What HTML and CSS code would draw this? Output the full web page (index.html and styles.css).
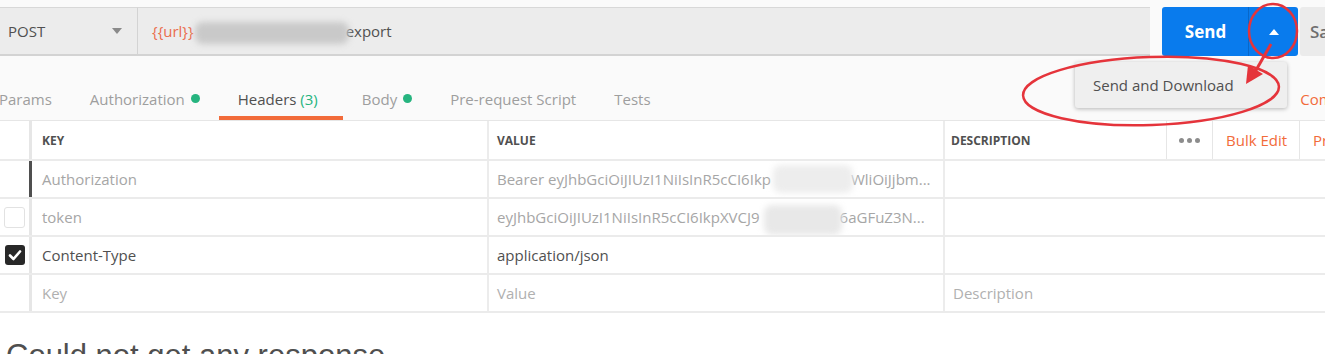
FILE: index.html
```html
<!DOCTYPE html>
<html>
<head>
<meta charset="utf-8">
<link rel="stylesheet" href="styles.css">
</head>
<body>
<div class="app">
  <div class="top">
    <div class="request-bar">
      <div class="method"><span>POST</span><span class="caret-down"></span></div>
      <div class="url"><span class="var">{{url}}</span><span class="blur url-blur"></span><span class="path">export</span></div>
      <div class="send-group">
        <div class="send">Send</div>
        <div class="send-more"><span class="caret-up"></span></div>
      </div>
      <div class="save">Save</div>
    </div>
    <div class="tabs-row">
      <div class="tab">Params</div>
      <div class="tab">Authorization<span class="dot"></span></div>
      <div class="tab active">Headers&nbsp;<span class="count">(3)</span></div>
      <div class="tab">Body<span class="dot"></span></div>
      <div class="tab">Pre-request Script</div>
      <div class="tab">Tests</div>
      <div class="links"><span>Cookies</span><span>Code</span><span>Comments (0)</span></div>
    </div>
  </div>
  <div class="table">
    <div class="row head">
      <div class="cell chk"></div>
      <div class="cell key">KEY</div>
      <div class="cell val">VALUE</div>
      <div class="cell desc">
        <span class="desc-title">DESCRIPTION</span>
        <span class="act dots"><i></i><i></i><i></i></span>
        <span class="act bulk">Bulk Edit</span>
        <span class="act presets">Presets</span>
      </div>
    </div>
    <div class="row disabled">
      <div class="cell chk"></div>
      <div class="cell key hover">Authorization</div>
      <div class="cell val">Bearer eyJhbGciOiJIUzI1NiIsInR5cCI6Ikp<span class="blur v-blur"></span>WliOiJjbm...</div>
      <div class="cell desc"></div>
    </div>
    <div class="row disabled">
      <div class="cell chk"><span class="box"></span></div>
      <div class="cell key">token</div>
      <div class="cell val">eyJhbGciOiJIUzI1NiIsInR5cCI6IkpXVCJ9<span class="blur v-blur2"></span>6aGFuZ3N...</div>
      <div class="cell desc"></div>
    </div>
    <div class="row">
      <div class="cell chk"><span class="box checked"><svg width="20" height="20" viewBox="0 0 20 20"><polyline points="5,10.5 8.5,14 15,6.5" fill="none" stroke="#fff" stroke-width="2.6" stroke-linecap="round" stroke-linejoin="round"/></svg></span></div>
      <div class="cell key">Content-Type</div>
      <div class="cell val">application/json</div>
      <div class="cell desc"></div>
    </div>
    <div class="row placeholder">
      <div class="cell chk"></div>
      <div class="cell key">Key</div>
      <div class="cell val">Value</div>
      <div class="cell desc">Description</div>
    </div>
  </div>
  <div class="response">Could not get any response</div>
</div>
<div class="dropdown">Send and Download</div>
<svg class="annot" width="1325" height="354" viewBox="0 0 1325 354">
  <ellipse cx="1273" cy="31" rx="24" ry="27" fill="none" stroke="#e5343b" stroke-width="2.5"/>
  <line x1="1271" y1="44" x2="1255" y2="72" stroke="#e5343b" stroke-width="3"/>
  <polygon points="1246,84 1248,65 1263,74" fill="#e5343b"/>
  <ellipse cx="1151" cy="91" rx="128" ry="34" fill="none" stroke="#e5343b" stroke-width="2.5" transform="rotate(-2 1151 91)"/>
</svg>
</body>
</html>
```
FILE: styles.css
```css
* { box-sizing: border-box; }
html, body { margin: 0; padding: 0; }
body {
  width: 1325px;
  height: 354px;
  overflow: hidden;
  background: #ffffff;
  font-family: "Open Sans", "Noto Sans", sans-serif;
  font-size: 15px;
  color: #505050;
  position: relative;
}
.top { background: #fafafa; padding-top: 7px; }
.request-bar { display: flex; height: 49px; }
.method {
  width: 138px;
  flex-shrink: 0;
  background: #ececec;
  border-top: 1px solid #d8d8d8;
  border-bottom: 2px solid #d3d3d3;
  border-right: 1px solid #d3d3d3;
  display: flex;
  align-items: center;
  justify-content: space-between;
  padding: 0 15px 0 8px;
  color: #505050;
}
.caret-down {
  width: 0; height: 0;
  border-left: 5px solid transparent;
  border-right: 5px solid transparent;
  border-top: 6px solid #8a8a8a;
}
.url {
  flex: 1;
  background: #ececec;
  border-top: 1px solid #d8d8d8;
  border-bottom: 2px solid #d3d3d3;
  display: flex;
  align-items: center;
  padding-left: 14px;
  white-space: nowrap;
}
.var { color: #ea6c4c; }
.blur { display: inline-block; filter: blur(3px); border-radius: 8px; flex-shrink: 0; }
.url-blur { width: 154px; height: 22px; background: #c9c9c9; margin: 4px -3px 0 1px; }
.path { color: #505050; }
.send-group {
  margin-left: 12px;
  width: 136px;
  flex-shrink: 0;
  display: flex;
  background: #097bed;
  border-radius: 3px;
}
.send {
  width: 87px;
  display: flex; align-items: center; justify-content: center;
  color: #fff; font-weight: 700; font-size: 17px;
  padding-left: 1px;
  border-right: 1px solid #0867c9;
}
.send-more { flex: 1; display: flex; align-items: center; justify-content: center; }
.caret-up {
  width: 0; height: 0;
  border-left: 5px solid transparent;
  border-right: 5px solid transparent;
  border-bottom: 6px solid #ffffff;
}
.save {
  margin-left: 2px;
  width: 25px;
  flex-shrink: 0;
  overflow: hidden;
  white-space: nowrap;
  background: #ebebeb;
  border-radius: 3px 0 0 3px;
  display: flex; align-items: center;
  padding-left: 10px;
  font-size: 17px; font-weight: 600; color: #6e6e6e;
}
.tabs-row {
  display: flex;
  align-items: flex-end;
  height: 65px;
  margin-left: -20px;
  border-bottom: 1px solid #e6e6e6;
  white-space: nowrap;
}
.tab, .links {
  height: 50px;
  padding: 12px 19px 0;
  border-bottom: 4px solid transparent;
  display: flex;
  align-items: center;
  color: #9e9e9e;
  flex-shrink: 0;
}
.tab.active { color: #505050; border-bottom-color: #f26b3a; padding-right: 25px; }
.count { color: #26b47f; }
.dot { width: 9px; height: 9px; border-radius: 50%; background: #26b47f; margin-left: 6px; margin-top: -1px; }
.links { margin-left: 514px; gap: 13px; color: #f26b3a; padding: 12px 0 0; }
.row {
  display: grid;
  grid-template-columns: 29px 458px 456px 1fr;
  height: 38px;
  border-bottom: 2px solid #ebebeb;
  white-space: nowrap;
}
.row.head { height: 40px; }
.cell { display: flex; align-items: center; overflow: hidden; }
.key { border-left: 3px solid #e6e6e6; padding-left: 10px; }
.key.hover { border-left-color: #4f4f4f; }
.val { border-left: 2px solid #ececec; padding-left: 8px; }
.desc { border-left: 2px solid #ececec; padding-left: 8px; }
.head .cell { font-size: 12px; font-weight: 700; color: #505050; }
.head .desc { padding-left: 6px; }
.desc-title { width: 215px; flex-shrink: 0; }
.act {
  height: 100%;
  flex-shrink: 0;
  display: flex; align-items: center;
  border-left: 1px solid #e6e6e6;
  font-size: 15px; font-weight: 400;
}
.head .cell .bulk, .head .cell .presets { color: #f26b3a; font-weight: 400; font-size: 15px; }
.dots { width: 46px; justify-content: center; gap: 3px; padding-top: 1px; }
.dots i { width: 5px; height: 5px; border-radius: 50%; background: #8c8c8c; display: block; }
.bulk { width: 87px; padding-left: 13px; }
.presets { padding-left: 13px; }
.disabled .cell { color: #a6a6a6; }
.placeholder .cell { color: #b0b0b0; }
.chk { padding-left: 4px; }
.box {
  width: 21px; height: 21px;
  border: 1px solid #e2e2e2;
  border-radius: 3px;
  background: #fff;
  display: block;
}
.box.checked {
  width: 20px; height: 20px;
  margin-left: 1px;
  border: 0;
  background: #282828;
}
.box svg { display: block; }
.v-blur { width: 80px; height: 28px; background: #ededed; margin: 0 -2px 0 2px; }
.v-blur2 { width: 78px; height: 30px; background: #e8e8e8; margin: 6px -2px 0 4px; }
.response {
  margin: 25px 0 0 6px;
  font-family: "Liberation Sans", Arial, sans-serif;
  font-size: 31px;
  line-height: 36px;
  color: #4f4f4f;
  white-space: nowrap;
}
.dropdown {
  position: absolute;
  left: 1075px;
  top: 62px;
  width: 212px;
  height: 46px;
  background: #efefef;
  border-radius: 3px;
  box-shadow: 0 1px 4px rgba(0,0,0,0.28);
  display: flex;
  align-items: center;
  padding-left: 18px;
  color: #505050;
  white-space: nowrap;
}
.annot { position: absolute; left: 0; top: 0; pointer-events: none; }
```
